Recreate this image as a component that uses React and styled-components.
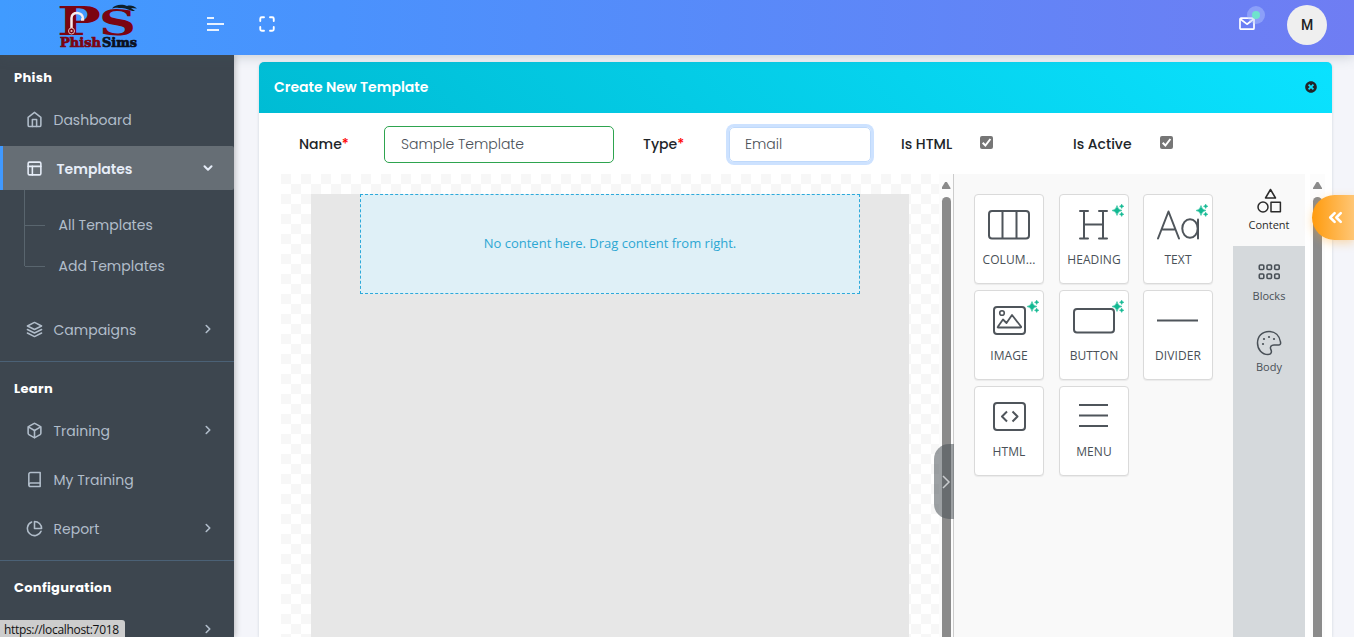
import React from "react";
import styled, { createGlobalStyle, css } from "styled-components";
import { FiHome, FiLayout, FiLayers, FiBox, FiBook, FiPieChart, FiMaximize, FiChevronRight, FiChevronDown, FiChevronsLeft } from "react-icons/fi";
import { FaTimesCircle } from "react-icons/fa";

const ui = `Poppins, Inter, "Open Sans", sans-serif`;

const Global = createGlobalStyle`
  * { box-sizing: border-box; }
  body { margin: 0; background: #f4f5fa; font-family: ${ui}; color: #212529; overflow: hidden; }
  svg { display: block; flex: none; }
`;

const Page = styled.div`
  position: relative;
  height: 637px;
  display: flex;
  flex-direction: column;
  overflow: hidden;
`;

/* ---------- top bar ---------- */
const TopBar = styled.header`
  height: 55px;
  flex: none;
  display: flex;
  align-items: center;
  padding: 0 27px 5px 57px;
  background: linear-gradient(90deg, #409bff, #4a92fd 25%, #6f7df3);
  color: #fff;
  box-shadow: 0 1px 12px rgba(69, 90, 100, 0.28);
  position: relative;
  z-index: 2;
`;
const Brand = styled.div`
  width: 150px;
  height: 50px;
  svg { overflow: visible; }
`;
const MenuButton = styled.div`
  margin-top: -1px;
`;
const ExpandButton = styled.div`
  margin-left: 34px;
  margin-top: -2px;
  flex: 1;
`;
const MailButton = styled.div`
  position: relative;
  width: 17px;
  margin-right: 31px;
  margin-top: -3px;
`;
const Pulse = styled.span`
  position: absolute;
  left: 8px;
  top: -11px;
  width: 18px;
  height: 18px;
  border-radius: 50%;
  background: rgba(180, 200, 255, 0.45);
  display: grid;
  place-items: center;
  &::after {
    content: "";
    width: 8px;
    height: 8px;
    border-radius: 50%;
    background: #6fe3cd;
  }
`;
const Avatar = styled.div`
  width: 40px;
  height: 40px;
  border-radius: 50%;
  background: #efefef;
  color: #222;
  display: grid;
  place-items: center;
  font: 500 14px Roboto, sans-serif;
`;

/* ---------- side navigation ---------- */
const Body = styled.div`
  flex: 1;
  min-height: 0;
  display: flex;
`;
const Sidebar = styled.nav`
  width: 234px;
  flex: none;
  background: #3d464f;
  box-shadow: 1px 0 6px rgba(43, 43, 43, 0.3);
`;
const Caption = styled.div`
  height: ${(p) => (p.$first ? 42 : 46)}px;
  padding: ${(p) => (p.$first ? 3 : 7)}px 0 0 14px;
  display: flex;
  align-items: center;
  color: #fff;
  font-size: 13px;
  font-weight: 700;
  letter-spacing: 0.32px;
`;
const Item = styled.div`
  height: 44px;
  margin-bottom: 5px;
  padding: 2px 19.5px 0 ${(p) => (p.$active ? 22.5 : 25.5)}px;
  display: flex;
  align-items: center;
  font-size: 14px;
  color: #b1bdca;
  ${(p) =>
    p.$active &&
    css`
      margin-bottom: 0;
      background: #666e75;
      border-left: 3px solid #4099ff;
      border-radius: 0 2px 2px 0;
      color: #e6edf8;
      font-weight: 600;
    `}
  svg:first-child { margin: -2px ${(p) => (p.$active ? 14 : 11)}px 0 0; }
  svg:last-child { margin-top: -2px; }
`;
const ItemText = styled.span`
  flex: 1;
  white-space: nowrap;
`;
const SubMenu = styled.div`
  height: 117px;
  padding: 14px 0 0 24px;
  position: relative;
  &::before {
    content: "";
    position: absolute;
    left: 24px;
    top: 0;
    height: 76px;
    border-left: 1px solid #59656e;
  }
`;
const SubItem = styled.div`
  height: 41px;
  padding-top: 2px;
  display: flex;
  align-items: center;
  color: #b1bdca;
  font-size: 14px;
  white-space: nowrap;
  &::before {
    content: "";
    width: 20px;
    margin: -1px 13.5px 0 1px;
    border-top: 1px solid #59656e;
  }
`;
const Rule = styled.div`
  margin-top: 10px;
  height: 1px;
  background: #4b6176;
`;

/* ---------- card ---------- */
const Content = styled.main`
  flex: 1;
  padding: 7px 22px 0 25px;
  display: flex;
`;
const Card = styled.section`
  flex: 1;
  background: #fff;
  border-radius: 5px 5px 0 0;
  box-shadow: 0 1px 3px rgba(69, 90, 100, 0.2);
  display: flex;
  flex-direction: column;
`;
const CardHeader = styled.div`
  height: 51px;
  flex: none;
  padding: 0 15px;
  display: flex;
  align-items: center;
  justify-content: space-between;
  border-radius: 5px 5px 0 0;
  background: linear-gradient(45deg, #00bcd4, #0ae2ff);
  color: #212529;
  svg { margin-top: -1px; }
`;
const Title = styled.h5`
  margin: 0;
  color: #fff;
  font-size: 14px;
  font-weight: 600;
`;
const FormRow = styled.div`
  height: 61px;
  flex: none;
  display: grid;
  grid-template-columns: 85px 259px 84px 174px 79px 93px 87px 20px;
  padding: 2px 0 0 40px;
  align-items: center;
`;
const Label = styled.label`
  font-size: 14px;
  font-weight: 500;
  color: #212529;
  white-space: nowrap;
  i { color: #f00; font-style: normal; }
`;
const Field = styled.div`
  height: ${(p) => (p.$focus ? 35 : 37)}px;
  width: ${(p) => (p.$focus ? 142 : 230)}px;
  margin-left: ${(p) => (p.$focus ? 2 : 0)}px;
  padding-left: ${(p) => (p.$focus ? 15 : 16)}px;
  border-radius: 5px;
  border: 1px solid ${(p) => (p.$focus ? "#bfd9fb" : "#2ea44f")};
  ${(p) => (p.$focus ? "box-shadow: 0 0 0 3px #cde2ff;" : "")}
  display: flex;
  align-items: center;
  font-size: 14px;
  font-weight: 300;
  color: #495057;
`;
const Check = styled.span`
  width: 13px;
  height: 13px;
  margin-top: -5px;
  border-radius: 2px;
  background: #767676;
`;

/* ---------- editor ---------- */
const Editor = styled.div`
  flex: 1;
  min-height: 0;
  padding-left: 22px;
  display: flex;
`;
const CanvasArea = styled.div`
  position: relative;
  width: 672px;
  display: flex;
`;
const Checker = styled.div`
  width: 658px;
  padding: 20px 30px 0;
  background: repeating-conic-gradient(#fff 0 25%, #f7f7f7 0 50%) 0 0 / 20px 20px;
`;
const Sheet = styled.div`
  width: 598px;
  height: 100%;
  background: #e7e7e7;
  padding-left: 49px;
`;
const DropZone = styled.div`
  width: 500px;
  height: 100px;
  padding-bottom: 2px;
  border: 1px dashed #2da9da;
  background: #dff0f7;
  color: #2da7d3;
  display: grid;
  place-items: center;
  font: 13px "Open Sans", sans-serif;
`;
const Track = styled.div`
  width: 15px;
  background: #fcfcfc;
  display: flex;
  flex-direction: column;
  align-items: center;
  padding-top: 8px;
  &::before {
    content: "";
    width: 9px;
    height: 7px;
    background: #8b8b8b;
    clip-path: polygon(40% 0, 60% 0, 100% 85%, 100% 100%, 0 100%, 0 85%);
  }
  &::after {
    content: "";
    flex: 1;
    width: 9px;
    margin-top: 8px;
    border-radius: 5px 5px 0 0;
    background: #8b8b8b;
  }
`;
const Handle = styled.div`
  position: absolute;
  right: -1px;
  top: 270px;
  width: 20px;
  height: 75px;
  border-radius: 15px 0 0 15px;
  background: rgba(77, 84, 90, 0.55);
  display: flex;
  align-items: center;
  padding-left: 7px;
`;
const Panel = styled.aside`
  width: 352px;
  margin-right: 5px;
  border-left: 1px solid #ccc;
  background: #f9f9f9;
  display: flex;
`;
const Tools = styled.div`
  width: 279px;
  padding: 20px 0 0 20px;
  display: grid;
  grid-template-columns: 85px 84px 70px;
  grid-auto-rows: 90px;
  row-gap: 6px;
`;
const Tool = styled.div`
  position: relative;
  width: 70px;
  border: 1px solid #dadada;
  border-radius: 4px;
  background: #fff;
  box-shadow: 0 1px 1px rgba(0, 0, 0, 0.06);
  display: flex;
  flex-direction: column;
  align-items: center;
  padding-top: 8px;
  color: #495057;
`;
const ToolName = styled.span`
  margin-top: 3px;
  font: 12px/16px "Open Sans", sans-serif;
  letter-spacing: 0.1px;
  white-space: nowrap;
`;
const SparkSlot = styled.span`
  position: absolute;
  right: 3px;
  top: 9px;
`;
const Tabs = styled.div`
  width: 72px;
  background: #d5d9dc;
`;
const Tab = styled.div`
  height: ${(p) => (p.$on ? 72 : 71)}px;
  background: ${(p) => (p.$on ? "#f9f9f9" : "transparent")};
  color: ${(p) => (p.$on ? "#2b2b2b" : "#495057")};
  display: flex;
  flex-direction: column;
  align-items: center;
  padding-top: ${(p) => (p.$on ? 14 : 13)}px;
  font: 11px/15px "Open Sans", sans-serif;
  svg { margin-bottom: ${(p) => (p.$on ? 3 : 2)}px; }
`;

/* ---------- overlays ---------- */
const Drawer = styled.div`
  position: absolute;
  right: 0;
  top: 195px;
  width: 42px;
  height: 45px;
  border-radius: 23px 0 0 23px;
  background: linear-gradient(90deg, #ff9b0d, #ffc675);
  box-shadow: 0 3px 10px rgba(255, 160, 30, 0.35);
  color: #fff;
  display: flex;
  align-items: center;
  padding: 0 0 1px 13px;
`;
const StatusUrl = styled.div`
  position: absolute;
  left: 0;
  bottom: 0;
  width: 125px;
  height: 17px;
  padding: 2px 0 0 4px;
  background: #cdcdcd;
  border-top-right-radius: 3px;
  color: #111;
  font: 12px/15px "Open Sans", sans-serif;
  white-space: nowrap;
  letter-spacing: -0.32px;
`;

const Logo = () => (
  <svg width="84" height="50" viewBox="57 0 84 50">
    <g fill="#7b0411" fontFamily="'DejaVu Serif', serif" fontWeight="700">
      <text x="57" y="34.500" fontSize="38.500" textLength="44" lengthAdjust="spacingAndGlyphs">P</text>
      <text x="99" y="34.500" fontSize="36" textLength="37" lengthAdjust="spacingAndGlyphs">S</text>
      <g fontSize="12" strokeWidth="0.7">
        <text x="60" y="46.500" stroke="#7b0411" textLength="41" lengthAdjust="spacingAndGlyphs">Phish</text>
        <text x="102" y="46.500" fill="#0b1020" stroke="#0b1020" textLength="35" lengthAdjust="spacingAndGlyphs">Sims</text>
      </g>
    </g>
    <path d="M71.500 28V18c0-7 12-7 11.500 1.500h-2" fill="none" stroke="#f7ecec" strokeWidth="2.500" />
    <circle cx="71.500" cy="31" r="3" fill="none" stroke="#e3bcbc" strokeWidth="1" />
    <circle cx="71.500" cy="31" r="1.100" fill="#e3bcbc" />
    <path d="M112 8.500c3-4.500 11-4.500 15-2.500 4-1 7 0 10 2.500l-6-.5 4 3c-5 .5-8-3-13-3-4 0-6-1-10 .5z" fill="#0e1f2a" />
  </svg>
);

const MenuLines = () => (
  <svg width="17" height="15" fill="none" stroke="#e8f2ff" strokeWidth="2">
    <path d="M0 1h7M0 7h17M0 13h12" />
  </svg>
);
const MailIcon = () => (
  <svg width="17" height="14" fill="none" stroke="#fff" strokeWidth="1.700" strokeLinejoin="round">
    <rect x="1" y="1.200" width="14" height="11" rx="1" />
    <path d="M1.300 2L8 7.200 14.800 2" />
  </svg>
);
const Tick = () => (
  <svg width="13" height="13" fill="none" stroke="#fff" strokeWidth="2">
    <path d="M2.700 6.700l2.700 2.800 5-6.500" />
  </svg>
);
const Spark = () => (
  <svg width="13" height="13" fill="#12b992">
    <path d="M5 1.500Q5.700 5.800 10 6.500Q5.700 7.200 5 11.500Q4.300 7.200 0 6.500Q4.300 5.800 5 1.500z" stroke="#12b992" strokeWidth="0.500" />
    <path d="M9.700 0Q10 2 12 2.300Q10 2.600 9.700 4.600Q9.400 2.600 7.400 2.300Q9.400 2 9.700 0z" stroke="#12b992" strokeWidth="0.400" />
    <path d="M9.700 8Q10 10 12 10.300Q10 10.600 9.700 12.600Q9.400 10.600 7.400 10.300Q9.400 10 9.700 8z" stroke="#12b992" strokeWidth="0.400" />
  </svg>
);

const art = {
  columns: <><rect x="1" y="8" width="40" height="27.500" rx="3" /><path d="M14.500 8v28M28.500 8v28" /></>,
  heading: <path d="M7 8h8M26 8h8M7 35.500h8M26 35.500h8M11 8v27.500M30 8v27.500M11 21.500h19" strokeLinecap="round" />,
  text: <><path d="M1 35.500L11.500 8.500 22 35.500M4.700 26.500h13.700" strokeLinecap="round" /><ellipse cx="33" cy="25.500" rx="7.700" ry="9.300" /><path d="M41 16.500v19" strokeLinecap="round" /></>,
  image: <><rect x="6" y="8" width="31" height="27" rx="3" /><circle cx="14" cy="14" r="2.300" strokeWidth="1.600" /><path d="M10 27.500l5-7 3.500 3.500 5.500-8 9 11.500q.5 1-.7 1H10.300q-1.200 0-.3-1z" strokeWidth="1.800" /></>,
  button: <rect x="1" y="10" width="40" height="23.500" rx="3" />,
  divider: <path d="M0 21.500h41" />,
  html: <><rect x="6" y="8" width="31" height="27" rx="3" /><path d="M19 16.500l-5 5 5 5M24.500 16.500l5 5-5 5" /></>,
  menu: <path d="M6 10h29M6 20.500h29M6 31h29" />,
};
const ToolArt = ({ name }) => (
  <svg width="42" height="46" viewBox="0 0 42 46" fill="none" stroke="#4f555b" strokeWidth="2" strokeLinejoin="round">{art[name]}</svg>
);

const ContentIcon = () => (
  <svg width="25" height="26" fill="none" stroke="currentColor" strokeWidth="1.500" strokeLinejoin="round">
    <path d="M13.500 1.500l5 8.500h-10z" /><circle cx="6" cy="19" r="5" /><rect x="14" y="14.300" width="9.400" height="9.400" />
  </svg>
);
const BlocksIcon = () => (
  <svg width="24" height="27" fill="none" stroke="currentColor" strokeWidth="1.600">
    {[6, 15].map((y) => [2.3, 10, 17.7].map((x) => <rect key={x + "-" + y} x={x} y={y} width="4.500" height="4.500" rx="1" />))}
  </svg>
);
const BodyIcon = () => (
  <svg width="26" height="27" fill="none" stroke="currentColor" strokeWidth="1.500">
    <path d="M13 1.500C6 1.500 1.500 6.500 1.500 13S6 24.500 12 24.500c3.500 0 4-3 2.800-5-1-2.500.2-4.500 3.200-4.500h5c1.500 0 1.800-1.500 1.500-3C23.500 5.500 19 1.500 13 1.500z" />
    <g fill="currentColor" stroke="none"><circle cx="8" cy="9" r="1.100" /><circle cx="13" cy="7" r="1.100" /><circle cx="18" cy="9" r="1.100" /><circle cx="7" cy="14" r="1.100" /></g>
  </svg>
);

const NavItem = ({ icon: Icon, text, active, arrow }) => (
  <Item $active={active}>
    <Icon size={17} strokeWidth={2.2} />
    <ItemText>{text}</ItemText>
    {arrow && (active ? <FiChevronDown size={14} strokeWidth={3.5} /> : <FiChevronRight size={14} strokeWidth={2.8} />)}
  </Item>
);

const tools = [
  ["columns", "COLUM..."], ["heading", "HEADING", 1], ["text", "TEXT", 1],
  ["image", "IMAGE", 1], ["button", "BUTTON", 1], ["divider", "DIVIDER"],
  ["html", "HTML"], ["menu", "MENU"],
];

export default function App() {
  return (
    <Page>
      <Global />
      <TopBar>
        <Brand><Logo /></Brand>
        <MenuButton><MenuLines /></MenuButton>
        <ExpandButton><FiMaximize size={18} strokeWidth={2.5} /></ExpandButton>
        <MailButton><MailIcon /><Pulse /></MailButton>
        <Avatar>M</Avatar>
      </TopBar>
      <Body>
        <Sidebar>
          <Caption $first>Phish</Caption>
          <NavItem icon={FiHome} text="Dashboard" />
          <NavItem icon={FiLayout} text="Templates" active arrow />
          <SubMenu>
            <SubItem>All Templates</SubItem>
            <SubItem>Add Templates</SubItem>
          </SubMenu>
          <NavItem icon={FiLayers} text="Campaigns" arrow />
          <Rule />
          <Caption>Learn</Caption>
          <NavItem icon={FiBox} text="Training" arrow />
          <NavItem icon={FiBook} text="My Training" />
          <NavItem icon={FiPieChart} text="Report" arrow />
          <Rule />
          <Caption>Configuration</Caption>
          <NavItem icon={FiBox} text="" arrow />
        </Sidebar>
        <Content>
          <Card>
            <CardHeader>
              <Title>Create New Template</Title>
              <FaTimesCircle size={12} />
            </CardHeader>
            <FormRow>
              <Label>Name<i>*</i></Label>
              <Field>Sample Template</Field>
              <Label>Type<i>*</i></Label>
              <Field $focus>Email</Field>
              <Label>Is HTML</Label>
              <Check><Tick /></Check>
              <Label>Is Active</Label>
              <Check><Tick /></Check>
            </FormRow>
            <Editor>
              <CanvasArea>
                <Checker>
                  <Sheet><DropZone>No content here. Drag content from right.</DropZone></Sheet>
                </Checker>
                <Track />
                <Handle>
                  <svg width="10" height="14" fill="none" stroke="#c9ccce" strokeWidth="1.500"><path d="M2 1l6 6-6 6" /></svg>
                </Handle>
              </CanvasArea>
              <Panel>
                <Tools>
                  {tools.map(([name, text, ai]) => (
                    <Tool key={name}>
                      <ToolArt name={name} />
                      <ToolName>{text}</ToolName>
                      {ai && <SparkSlot><Spark /></SparkSlot>}
                    </Tool>
                  ))}
                </Tools>
                <Tabs>
                  <Tab $on><ContentIcon />Content</Tab>
                  <Tab><BlocksIcon />Blocks</Tab>
                  <Tab><BodyIcon />Body</Tab>
                </Tabs>
              </Panel>
              <Track />
            </Editor>
          </Card>
        </Content>
      </Body>
      <Drawer><FiChevronsLeft size={21} strokeWidth={3} /></Drawer>
      <StatusUrl>https://localhost:7018</StatusUrl>
    </Page>
  );
}
